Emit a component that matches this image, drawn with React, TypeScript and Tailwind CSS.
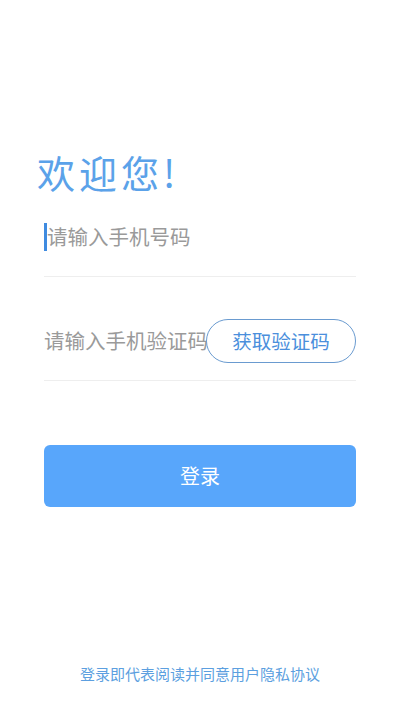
export default function App() {
  return (
    <div
      className="relative flex h-[711px] w-[400px] flex-col bg-white"
      style={{ fontFamily: '"Noto Sans CJK SC", "Noto Sans", sans-serif' }}
    >
      <div className="pl-[37px] pt-[147px]">
        <h1 className="text-[38px] leading-[50px] tracking-[4px] text-[#5ba2e9]">欢迎您!</h1>
      </div>

      <div className="mx-[44px]">
        {/* phone */}
        <div className="flex h-[80px] items-center border-b border-[#eeeeee]">
          <span className="h-[28px] w-[3px] bg-[#3f8be0]" />
          <span className="text-[20.5px] text-[#9a9a9a]">请输入手机号码</span>
        </div>

        {/* code */}
        <div className="mt-[24px] flex h-[80px] items-center border-b border-[#eeeeee]">
          <span className="min-w-0 flex-1 whitespace-nowrap text-[20.5px] text-[#9a9a9a]">请输入手机验证码</span>
          <button
            type="button"
            className="relative flex h-[44px] w-[150px] shrink-0 items-center justify-center rounded-full border border-[#6a9bd0] bg-white text-[19.5px] text-[#4b8fdc]"
          >
            获取验证码
          </button>
        </div>

        <button
          type="button"
          className="mt-[64px] flex h-[62px] w-full items-center justify-center rounded-[6px] bg-[#58a6fb] text-[20px] text-white"
        >
          登录
        </button>
      </div>

      <div className="mt-auto pb-[26px] text-center text-[15px] text-[#5c9fe0]">
        登录即代表阅读并同意用户隐私协议
      </div>
    </div>
  );
}
